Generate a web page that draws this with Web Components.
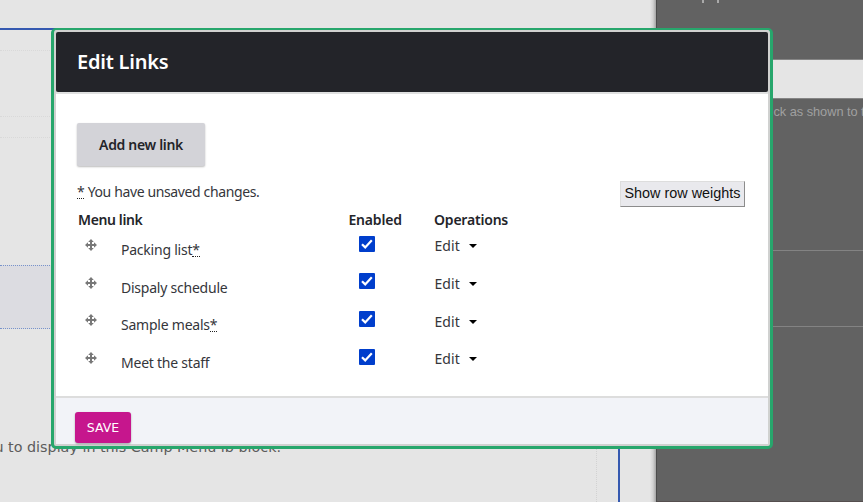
<!DOCTYPE html>
<html lang="en">
<head>
<meta charset="utf-8">
<title>Edit Links</title>
<style>
html,body{margin:0;height:100%;overflow:hidden;background:#e5e5e5}
body{font-family:"Noto Sans",sans-serif;color:#35363b}
</style>
</head>
<body>
<edit-page></edit-page>
<script>
const define = (name, html) => {
  const t = document.createElement('template');
  t.innerHTML = html;
  customElements.define(name, class extends HTMLElement {
    constructor() {
      super();
      this.attachShadow({mode: 'open'}).append(t.content.cloneNode(true));
    }
  });
};

define('move-icon', `<style>:host{display:block;width:12px;height:12px}svg{display:block}</style>
<svg width="12" height="12" viewBox="0 0 12 12"><g fill="#787878"><path d="M6 0L8.8 3H3.2zM6 12L3.2 9h5.6zM0 6L3 3.2v5.6zM12 6L9 8.8V3.2z"/><path d="M5 2h2v8H5zM2 5h8v2H2z"/></g></svg>`);

define('check-box', `<style>:host{display:block;width:16px;height:16px;background:#003ecc;border-radius:1px}svg{display:block}</style>
<svg width="16" height="16" viewBox="0 0 16 16"><path d="M3 8.2l3.2 3.2L12.8 4.2" fill="none" stroke="#fff" stroke-width="2.2"/></svg>`);

define('changed-mark', `<style>:host{display:inline}abbr{text-decoration:none;border-bottom:1px dotted #222;display:inline-block;height:15px;line-height:18px}</style><abbr>*</abbr>`);

define('menu-row', `<style>
:host{display:grid;grid-template-columns:44px 238px 75.4px 1fr;height:37.67px;font-size:14px;line-height:20px}
move-icon{margin:4px 0 0 8px}.name{padding-top:5px;white-space:nowrap;letter-spacing:-.23px}
check-box{margin-top:.8px}.ops{display:flex;gap:9px;padding-top:1.2px;letter-spacing:.1px}
.ops svg{margin-top:8px}
</style><move-icon></move-icon><div class="name"><slot></slot></div><check-box></check-box>
<div class="ops"><span class="e">Edit</span><svg width="8" height="5" viewBox="0 0 8 5"><path d="M0 0h8L4 4z" fill="#000"/></svg></div>`);

define('add-button', `<style>:host{display:flex;width:128px;height:43px;align-items:center;justify-content:center;background:#d3d3d8;border-radius:2px;box-shadow:0 1px 2px #0004;color:#232429;font-weight:600;font-size:14px;letter-spacing:-.33px}</style><slot></slot>`);
define('weights-button', `<style>:host{display:block;box-sizing:border-box;width:125px;height:26px;margin-top:1px;border:1px solid;border-color:#ddd #8c8c8c #8c8c8c #ddd;background:#e9e9ed;color:#111;font:14.4px/23px "Liberation Sans",sans-serif;text-align:center;white-space:nowrap}</style><slot></slot>`);
define('save-button', `<style>:host{display:flex;box-sizing:border-box;width:56px;height:31px;align-items:center;justify-content:center;background:#c6168d;border-radius:3px;box-shadow:0 1px 2px #0005;color:#fff;font:12.5px/29px "DejaVu Sans",sans-serif}</style><slot></slot>`);

define('edit-dialog', `<style>
:host{display:flex;flex-direction:column;box-sizing:border-box;width:722px;height:421px;border:3px solid #27a66c;border-top-width:2px;border-radius:5px;background:#d0d1d0;padding:2px}
header{box-sizing:border-box;height:60px;background:#232429;border-radius:2px;padding:14px 0 0 21px;color:#fff;font-size:20px;line-height:32px;font-weight:600;letter-spacing:-.23px;flex:none}
main{box-sizing:border-box;margin-top:2px;height:302px;background:#fff;padding:29px 21px 0;flex:none;box-shadow:0 -2px #dfe0e0}
.status{display:flex;justify-content:space-between;font-size:14px;line-height:20px;height:27px;margin-top:14px;padding-right:2px}
.status span{margin-top:2px;white-space:pre;letter-spacing:-.37px}
.heads{display:grid;grid-template-columns:270.5px 85.5px 1fr;font-size:14px;line-height:20px;height:21px;color:#232429;font-weight:600;margin-left:1px;margin-top:3px;letter-spacing:-.2px}
.heads span:first-child{letter-spacing:-.38px}
.rows{margin-top:4px}
footer{box-sizing:border-box;height:46px;margin-top:2px;background:#f2f3f8;padding:14px 0 0 19px;flex:none;box-shadow:0 -2px #dddddd}
</style>
<header class="title">Edit Links</header>
<main><add-button>Add new link</add-button>
<div class="status"><span><changed-mark></changed-mark> You have unsaved changes.</span><weights-button>Show row weights</weights-button></div>
<div class="heads"><span>Menu link</span><span>Enabled</span><span>Operations</span></div>
<div class="rows"><menu-row>Packing list<changed-mark></changed-mark></menu-row><menu-row>Dispaly schedule</menu-row><menu-row>Sample meals<changed-mark></changed-mark></menu-row><menu-row>Meet the staff</menu-row></div>
</main><footer><save-button>SAVE</save-button></footer>`);

define('page-canvas', `<style>
:host{display:block;box-sizing:border-box;width:656px;height:502px;background:linear-gradient(90deg,transparent 650px,#d2d2d2 653px,#a4a4a4 656px),#e5e5e5;padding-top:28px}
.region{box-sizing:border-box;width:620px;height:474px;border-top:2px solid #3559b0;border-right:2px solid #3559b0}
.inner{box-sizing:border-box;width:597px;height:472px;border-right:1px dotted #d2d2d2}
.a{height:20px;border-bottom:1px dotted #d9d9d9}.b{height:65px;border-bottom:1px dotted #d9d9d9}.c{height:20px;border-bottom:1px dotted #d9d9d9}
.sel{box-sizing:border-box;margin-top:127px;height:64px;background:#dcdce1;border:dotted #7893cb;border-width:1px 0}
p{margin:107px 0 0 -5.5px;font:14.32px/22px "DejaVu Sans",sans-serif;color:#5c5c5c;white-space:nowrap}
</style><div class="region"><div class="inner"><div class="a"></div><div class="b"></div><div class="c"></div><div class="sel"></div><p>u to display in this Camp Menu ib block.</p></div></div>`);

define('side-panel', `<style>
:host{display:block;box-sizing:border-box;width:207px;height:502px;background:#626262;border-left:1px solid #4c4c4c;overflow:hidden}
.cut{display:flex;gap:13px;height:3px;padding-left:45px}.cut i{width:2px;background:#aaa}
.field{box-sizing:border-box;height:40px;margin-top:56px;background:#e5e5e5;border:solid #858585;border-width:1px 0}
.help{height:24px;padding:3px 0 0 116.5px;font:12.8px/20px "Liberation Sans",sans-serif;letter-spacing:-.04px;color:#a0a0a0;white-space:nowrap}
.x{height:124px;border-bottom:1px solid #838383}.y{height:75px;border-bottom:1px solid #838383}.z{height:174px;border-bottom:1px solid #554f4f}
</style><div class="cut"><i></i><i></i></div><div class="field"></div><div class="help">ck as shown to t</div><div class="x"></div><div class="y"></div><div class="z"></div>`);

define('edit-page', `<style>
:host{display:flex;position:relative;width:863px;height:502px;overflow:hidden}
page-canvas,side-panel{flex:none}
edit-dialog{position:absolute;left:51px;top:28px}
</style><page-canvas></page-canvas><side-panel></side-panel><edit-dialog></edit-dialog>`);
</script>
</body>
</html>
